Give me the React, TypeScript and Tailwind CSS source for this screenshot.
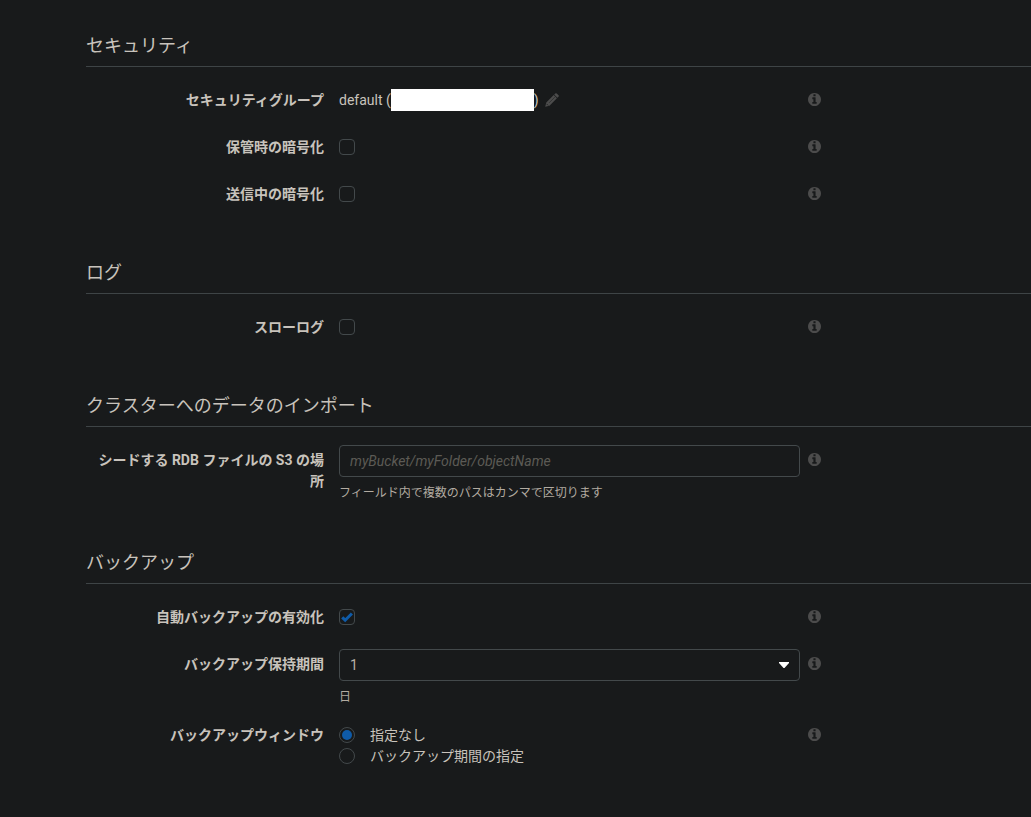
import React, { useState } from 'react';

const fieldClass =
  'block h-8 w-full rounded border border-[#43494b] bg-transparent px-[10px] text-sm text-[#b8b1a7] outline-none focus:border-[#0f5ba8]';

const helpClass = 'mt-2 text-xs leading-4 text-[#b2aba1]';

function InfoIcon() {
  return (
    <svg viewBox="0 0 1536 1536" className="h-[13px] w-[13px]" fill="currentColor" aria-hidden="true">
      <path d="M1024 1248v-160q0-14-9-23t-23-9h-96v-512q0-14-9-23t-23-9h-320q-14 0-23 9t-9 23v160q0 14 9 23t23 9h96v320h-96q-14 0-23 9t-9 23v160q0 14 9 23t23 9h448q14 0 23-9t9-23zM896 352v-160q0-14-9-23t-23-9h-192q-14 0-23 9t-9 23v160q0 14 9 23t23 9h192q14 0 23-9t9-23zM1536 768q0 209-103 385.5t-279.5 279.5-385.5 103-385.5-103-279.5-279.5-103-385.5 103-385.5 279.5-279.5 385.5-103 385.5 103 279.5 279.5 103 385.5z" />
    </svg>
  );
}

function PencilIcon() {
  return (
    <svg viewBox="0 0 14 14" className="h-[14px] w-[14px]" fill="currentColor" aria-hidden="true">
      <path d="M9.2 1.6 10.3.5q.7-.7 1.400 0l1.800 1.800q.7.7 0 1.400l-1.100 1.100zM8.700 2.100l3.200 3.200-7.400 7.400-4.300 1.100 1.100-4.300z" />
      <path d="M4 9.900 9.800 4.100" fill="none" stroke="#181a1b" strokeWidth=".5" />
      <path d="M1.600 10.900 3.100 12.400" fill="none" stroke="#181a1b" strokeWidth=".8" />
    </svg>
  );
}

function Section({ title, children }: { title: string; children: React.ReactNode }) {
  return (
    <section>
      <h2 className="border-b border-[#3e4446] pb-1.5 text-lg leading-7">{title}</h2>
      <div className="mt-[18px] flex flex-col gap-[15px]">{children}</div>
    </section>
  );
}

interface RowProps {
  label: string;
  htmlFor?: string;
  labelId?: string;
  children: React.ReactNode;
}

function Row({ label, htmlFor, labelId, children }: RowProps) {
  const labelClass = 'block pt-[5px] pr-[7px] text-right font-bold leading-[21px]';
  return (
    <div className="grid min-h-8 grid-cols-[245fr_461fr_223fr] gap-2">
      {htmlFor ? (
        <label htmlFor={htmlFor} className={labelClass}>
          {label}
        </label>
      ) : (
        <span id={labelId} className={labelClass}>
          {label}
        </span>
      )}
      <div>{children}</div>
      <div>
        <button type="button" aria-label="情報" className="mt-2 block text-[#4c4c4c]">
          <InfoIcon />
        </button>
      </div>
    </div>
  );
}

interface CheckboxProps {
  id: string;
  checked: boolean;
  onChange: (checked: boolean) => void;
}

function Checkbox({ id, checked, onChange }: CheckboxProps) {
  return (
    <div className="mt-[7px] grid h-4 w-4">
      <input
        id={id}
        type="checkbox"
        checked={checked}
        onChange={(e) => onChange(e.target.checked)}
        className="col-start-1 row-start-1 h-4 w-4 appearance-none rounded border border-[#43494b]"
      />
      {checked && (
        <svg viewBox="0 0 16 16" className="pointer-events-none col-start-1 row-start-1 h-4 w-4" aria-hidden="true">
          <path d="M3.200 8.300 6.200 11.200 12.900 4.500" fill="none" stroke="#0f5ba8" strokeWidth="3" />
        </svg>
      )}
    </div>
  );
}

export default function App() {
  const [atRest, setAtRest] = useState(false);
  const [inTransit, setInTransit] = useState(false);
  const [slowLog, setSlowLog] = useState(false);
  const [autoBackup, setAutoBackup] = useState(true);
  const [seedLocation, setSeedLocation] = useState('');
  const [retention, setRetention] = useState('1');
  const [backupWindow, setBackupWindow] = useState('none');

  const windowOptions = [
    { value: 'none', label: '指定なし' },
    { value: 'custom', label: 'バックアップ期間の指定' },
  ];

  return (
    <main className="min-h-screen bg-[#181a1b] pt-8 pb-12 pl-[86px] font-[Roboto,'Noto_Sans_CJK_JP',sans-serif] text-sm text-[#c8c3bc]">
      <form className="flex flex-col gap-12" onSubmit={(e) => e.preventDefault()}>
        <Section title="セキュリティ">
          <Row label="セキュリティグループ">
            <div className="flex h-[30px] items-center">
              <span>default (</span>
              <span className="h-[22px] w-[143px] bg-white" />
              <span>)</span>
              <button type="button" aria-label="編集" className="ml-1.5 text-[#4c4c4c]">
                <PencilIcon />
              </button>
            </div>
          </Row>
          <Row label="保管時の暗号化" htmlFor="at-rest">
            <Checkbox id="at-rest" checked={atRest} onChange={setAtRest} />
          </Row>
          <Row label="送信中の暗号化" htmlFor="in-transit">
            <Checkbox id="in-transit" checked={inTransit} onChange={setInTransit} />
          </Row>
        </Section>

        <Section title="ログ">
          <Row label="スローログ" htmlFor="slow-log">
            <Checkbox id="slow-log" checked={slowLog} onChange={setSlowLog} />
          </Row>
        </Section>

        <Section title="クラスターへのデータのインポート">
          <Row label="シードする RDB ファイルの S3 の場所" htmlFor="seed-location">
            <input
              id="seed-location"
              type="text"
              value={seedLocation}
              onChange={(e) => setSeedLocation(e.target.value)}
              placeholder="myBucket/myFolder/objectName"
              className={`${fieldClass} placeholder:text-[#5c5a55] placeholder:italic`}
            />
            <p className={helpClass}>フィールド内で複数のパスはカンマで区切ります</p>
          </Row>
        </Section>

        <Section title="バックアップ">
          <Row label="自動バックアップの有効化" htmlFor="auto-backup">
            <Checkbox id="auto-backup" checked={autoBackup} onChange={setAutoBackup} />
          </Row>
          <Row label="バックアップ保持期間" htmlFor="retention">
            <div className="grid items-center">
              <select
                id="retention"
                value={retention}
                onChange={(e) => setRetention(e.target.value)}
                className={`${fieldClass} col-start-1 row-start-1 appearance-none`}
              >
                {['1', '2', '3', '4', '5', '6', '7'].map((days) => (
                  <option key={days} value={days} className="bg-[#181a1b]">
                    {days}
                  </option>
                ))}
              </select>
              <svg
                viewBox="0 0 10 6"
                className="pointer-events-none col-start-1 row-start-1 mr-[11px] h-[6px] w-[10px] justify-self-end"
                aria-hidden="true"
              >
                <path d="M0 0h10v1L5.500 6h-1L0 1z" fill="#fff" />
              </svg>
            </div>
            <p className={helpClass}>日</p>
          </Row>
          <Row label="バックアップウィンドウ" labelId="window-label">
            <div role="radiogroup" aria-labelledby="window-label" className="pt-1">
              {windowOptions.map((option) => (
                <label key={option.value} className="flex h-[21px] items-center gap-[15px]">
                  <input
                    type="radio"
                    name="backup-window"
                    value={option.value}
                    checked={backupWindow === option.value}
                    onChange={() => setBackupWindow(option.value)}
                    className="grid h-4 w-4 appearance-none place-items-center rounded-full border border-[#43494b] before:h-[10px] before:w-[10px] before:rounded-full checked:before:bg-[#0f5ba8]"
                  />
                  {option.label}
                </label>
              ))}
            </div>
          </Row>
        </Section>
      </form>
    </main>
  );
}
